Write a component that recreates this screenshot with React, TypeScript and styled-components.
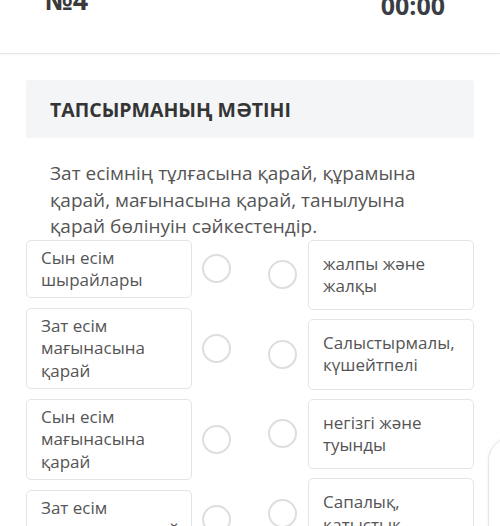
import React from "react";
import styled, { createGlobalStyle } from "styled-components";

const GlobalStyle = createGlobalStyle`
  * { box-sizing: border-box; }
  html, body {
    margin: 0;
    padding: 0;
    background: #ffffff;
    font-family: "Open Sans", "Noto Sans", sans-serif;
    overflow: hidden;
  }
`;

type Pair = { left: string[]; right: string[] };

const pairs: Pair[] = [
  { left: ["Сын есім", "шырайлары"], right: ["жалпы және", "жалқы"] },
  { left: ["Зат есім", "мағынасына", "қарай"], right: ["Салыстырмалы,", "күшейтпелі"] },
  { left: ["Сын есім", "мағынасына", "қарай"], right: ["негізгі және", "туынды"] },
  { left: ["Зат есім", "тұлғасына қарай"], right: ["Сапалық,", "қатыстық"] },
];

function App() {
  return (
    <Page>
      <GlobalStyle />
      <Header>
        <TaskNo>№4</TaskNo>
        <Timer>00:00</Timer>
      </Header>
      <Content>
        <TitleBox>ТАПСЫРМАНЫҢ МӘТІНІ</TitleBox>
        <Question>
          Зат есімнің тұлғасына қарай, құрамына қарай, мағынасына қарай,
          танылуына қарай бөлінуін сәйкестендір.
        </Question>
        <Matching>
          <Column $gap={10}>
            {pairs.map((p, i) => (
              <Item key={i}>
                <Card $side="left">
                  {p.left.map((l) => (
                    <Line key={l}>{l}</Line>
                  ))}
                </Card>
                <Radio $side="left" />
              </Item>
            ))}
          </Column>
          <Column $gap={9}>
            {pairs.map((p, i) => (
              <Item key={i}>
                <Radio $side="right" />
                <Card $side="right">
                  {p.right.map((l) => (
                    <Line key={l}>{l}</Line>
                  ))}
                </Card>
              </Item>
            ))}
          </Column>
        </Matching>
      </Content>
      <FloatButton />
    </Page>
  );
}

const Page = styled.div`
  position: relative;
  width: 500px;
  height: 526px;
  overflow: hidden;
  background: #ffffff;
`;

const Header = styled.div`
  display: flex;
  justify-content: space-between;
  align-items: flex-start;
  height: 54px;
  padding: 0 55px 0 45px;
  border-bottom: 1px solid #e7e7e7;
  box-shadow: 0 1px 2px rgba(0, 0, 0, 0.03);
`;

const TaskNo = styled.div`
  font-size: 27px;
  line-height: 1;
  font-weight: 700;
  color: #3a3a3a;
  margin-top: -14px;
`;

const Timer = styled.div`
  font-size: 25px;
  line-height: 1;
  font-weight: 700;
  color: #3a3d44;
  margin-top: -7px;
`;

const Content = styled.div`
  padding: 26px 26px 0;
`;

const TitleBox = styled.div`
  height: 58px;
  display: flex;
  align-items: center;
  padding: 0 24px;
  background: #f4f5f7;
  border-radius: 3px;
  font-size: 19.5px;
  font-weight: 700;
  color: #353535;
`;

const Question = styled.div`
  padding: 22px 24px 0;
  font-size: 19px;
  line-height: 26.5px;
  color: #555555;
`;

const Matching = styled.div`
  display: flex;
  justify-content: space-between;
`;

const Column = styled.div<{ $gap: number }>`
  display: flex;
  flex-direction: column;
  gap: ${(p) => p.$gap}px;
`;

const Item = styled.div`
  display: flex;
  align-items: center;
`;

const Card = styled.div<{ $side: "left" | "right" }>`
  width: 166px;
  padding: ${(p) => (p.$side === "left" ? "6px 6px 6px 14px" : "12px 6px 12px 14px")};
  background: #ffffff;
  border: 1px solid #e4e4e4;
  border-radius: 5px;
  font-size: 17px;
  line-height: 22.3px;
  color: #555555;
`;

const Line = styled.div`
  white-space: nowrap;
`;

const Radio = styled.div<{ $side: "left" | "right" }>`
  width: 29px;
  height: 29px;
  border-radius: 50%;
  border: 2px solid #dedede;
  margin: ${(p) => (p.$side === "left" ? "0 0 0 10px" : "0 11px 0 0")};
  flex-shrink: 0;
`;

const FloatButton = styled.div`
  position: absolute;
  left: 488px;
  top: 437px;
  width: 70px;
  height: 110px;
  border-radius: 24px;
  border: 1px solid #e6e6e6;
  background: #ffffff;
  box-shadow: 0 0 4px rgba(0, 0, 0, 0.06);
`;

export default App;
